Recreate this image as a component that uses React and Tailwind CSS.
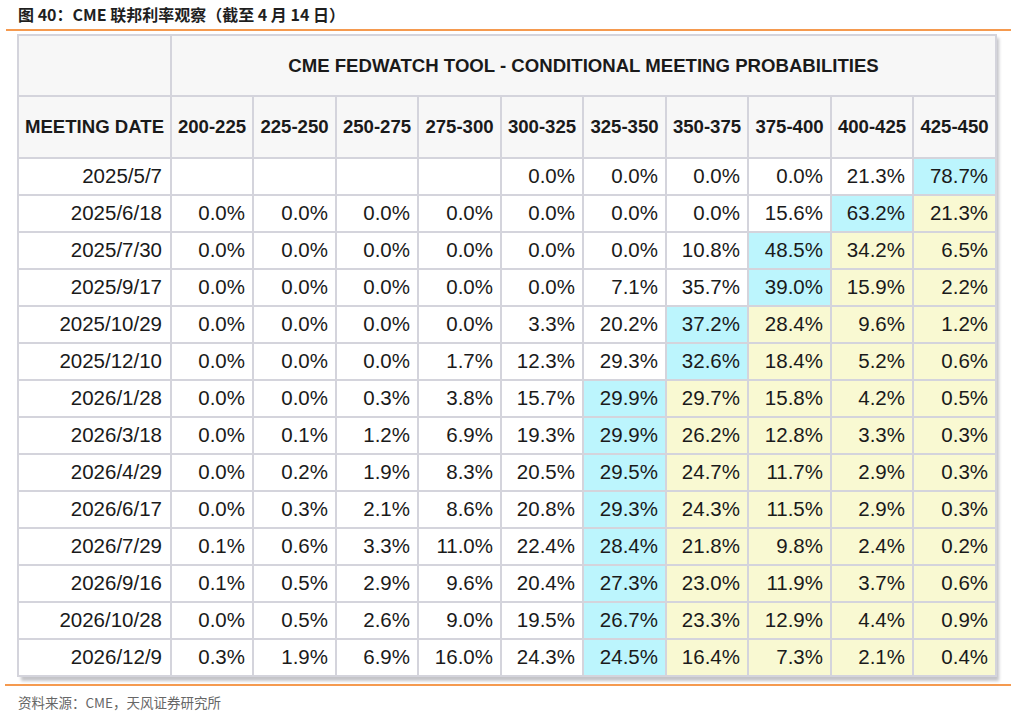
import React from "react";

const cols = ["200-225","225-250","250-275","275-300","300-325","325-350","350-375","375-400","400-425","425-450"];
const rows = [
  ["2025/5/7", ["","","","","0.0%","0.0%","0.0%","0.0%","21.3%","78.7%"]],
  ["2025/6/18", ["0.0%","0.0%","0.0%","0.0%","0.0%","0.0%","0.0%","15.6%","63.2%","21.3%"]],
  ["2025/7/30", ["0.0%","0.0%","0.0%","0.0%","0.0%","0.0%","10.8%","48.5%","34.2%","6.5%"]],
  ["2025/9/17", ["0.0%","0.0%","0.0%","0.0%","0.0%","7.1%","35.7%","39.0%","15.9%","2.2%"]],
  ["2025/10/29", ["0.0%","0.0%","0.0%","0.0%","3.3%","20.2%","37.2%","28.4%","9.6%","1.2%"]],
  ["2025/12/10", ["0.0%","0.0%","0.0%","1.7%","12.3%","29.3%","32.6%","18.4%","5.2%","0.6%"]],
  ["2026/1/28", ["0.0%","0.0%","0.3%","3.8%","15.7%","29.9%","29.7%","15.8%","4.2%","0.5%"]],
  ["2026/3/18", ["0.0%","0.1%","1.2%","6.9%","19.3%","29.9%","26.2%","12.8%","3.3%","0.3%"]],
  ["2026/4/29", ["0.0%","0.2%","1.9%","8.3%","20.5%","29.5%","24.7%","11.7%","2.9%","0.3%"]],
  ["2026/6/17", ["0.0%","0.3%","2.1%","8.6%","20.8%","29.3%","24.3%","11.5%","2.9%","0.3%"]],
  ["2026/7/29", ["0.1%","0.6%","3.3%","11.0%","22.4%","28.4%","21.8%","9.8%","2.4%","0.2%"]],
  ["2026/9/16", ["0.1%","0.5%","2.9%","9.6%","20.4%","27.3%","23.0%","11.9%","3.7%","0.6%"]],
  ["2026/10/28", ["0.0%","0.5%","2.6%","9.0%","19.5%","26.7%","23.3%","12.9%","4.4%","0.9%"]],
  ["2026/12/9", ["0.3%","1.9%","6.9%","16.0%","24.3%","24.5%","16.4%","7.3%","2.1%","0.4%"]],
];

const widths = [82, 83, 82, 83, 82, 83, 82, 83, 82, 83];

export default function App() {
  return (
    <div className="w-[1017px] h-[715px] bg-white relative overflow-hidden" style={{ fontFamily: '"Liberation Sans", Arial, sans-serif' }}>
      <div className="h-[29px] pl-[18px] pt-[3px] text-[16px] leading-[22px] font-bold text-[#1f1f1f]" style={{ fontFamily: '"Noto Sans CJK SC", "Liberation Sans", sans-serif' }}>
        图 40：CME 联邦利率观察（截至 4 月 14 日）
      </div>
      <div className="ml-[6px] w-[1005px] h-[2px] bg-[#f59a4f]" />
      <div className="ml-[17px] mt-[3px] w-[978px] shadow-[4px_4px_3px_#c4c4c8]">
        <table className="border-collapse table-fixed w-[978px] text-[#1a1a1a]">
          <colgroup>
            <col style={{ width: 153 }} />
            {widths.map((w, i) => <col key={i} style={{ width: w }} />)}
          </colgroup>
          <thead>
            <tr className="h-[61px] bg-[#f7f7f7]">
              <th className="border-2 border-[#d4d4dc]" />
              <th colSpan={10} className="border-2 border-[#d4d4dc] text-[18.6px] font-bold text-center">
                CME FEDWATCH TOOL - CONDITIONAL MEETING PROBABILITIES
              </th>
            </tr>
            <tr className="h-[62px] bg-[#f7f7f7]">
              <th className="border-2 border-[#d4d4dc] text-[18.6px] font-bold text-center whitespace-nowrap px-0">MEETING DATE</th>
              {cols.map((c) => (
                <th key={c} className="border-2 border-[#d4d4dc] text-[18.6px] font-bold text-center whitespace-nowrap px-0">{c}</th>
              ))}
            </tr>
          </thead>
          <tbody>
            {rows.map(([date, vals]) => {
              const nums = vals.map((v) => (v === "" ? -1 : parseFloat(v)));
              const maxIdx = nums.indexOf(Math.max(...nums));
              return (
                <tr key={date} className="h-[37px]">
                  <td className="border-2 border-[#d4d4dc] text-right pr-[8px] text-[20.5px] bg-white">{date}</td>
                  {vals.map((v, i) => {
                    let bg = "bg-white";
                    if (i === maxIdx) bg = "bg-[#bcf5fd]";
                    else if (i > maxIdx) bg = "bg-[#f9f9d2]";
                    return (
                      <td key={i} className={`border-2 border-[#d4d4dc] text-right pr-[7px] text-[20.5px] whitespace-nowrap ${bg}`}>{v}</td>
                    );
                  })}
                </tr>
              );
            })}
          </tbody>
        </table>
      </div>
      <div className="ml-[5px] mt-[7px] w-[1006px] h-[2px] bg-[#f59a4f]" />
      <div className="pl-[18px] pt-[7px] text-[13.5px] leading-[18px] text-[#666]" style={{ fontFamily: '"Noto Sans CJK SC", "Liberation Sans", sans-serif' }}>
        资料来源：CME，天风证券研究所
      </div>
    </div>
  );
}
